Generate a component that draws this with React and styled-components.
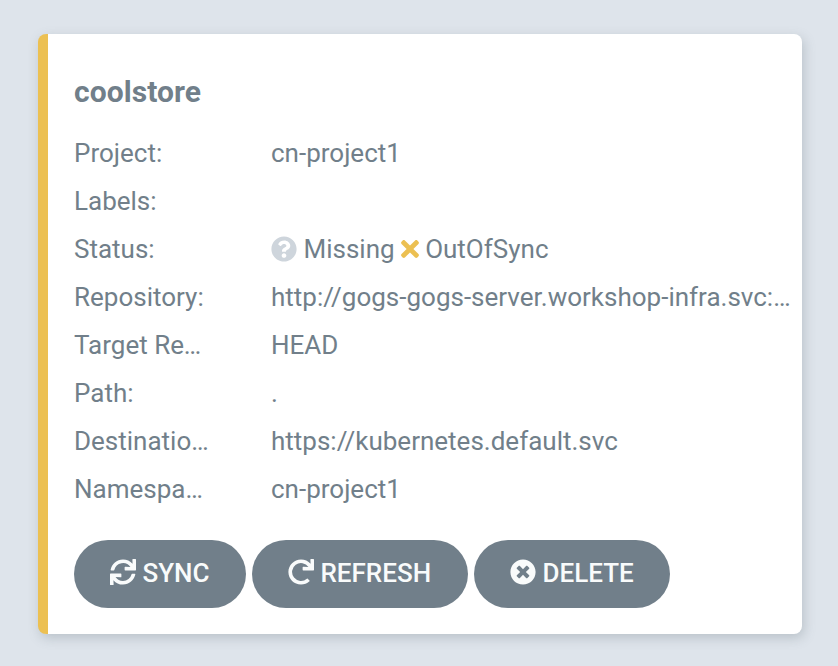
import React from 'react';
import styled, { createGlobalStyle } from 'styled-components';
import { FaQuestionCircle, FaTimes, FaSync, FaRedo, FaTimesCircle } from 'react-icons/fa';

const GlobalStyle = createGlobalStyle`
  * { box-sizing: border-box; }
  body {
    margin: 0;
    background: #dee4eb;
    font-family: Roboto, sans-serif;
    -webkit-font-smoothing: antialiased;
  }
`;

const Page = styled.main`
  height: 666px;
  padding: 34px 36px 32px 38px;
  background: #dee4eb;
  color: #717f8a;
`;

const Card = styled.article`
  height: 600px;
  padding: 34px 8px 0 26px;
  border-left: 10px solid #ecc052;
  border-radius: 8px;
  background: #fff;
  box-shadow: 2px 4px 12px rgba(90, 105, 110, 0.27);
`;

const Title = styled.h1`
  margin: 0 0 13px;
  font-size: 30px;
  line-height: 48px;
  font-weight: 700;
  letter-spacing: 0.06px;
`;

const Details = styled.dl`
  margin: 0;
`;

const Row = styled.div`
  display: grid;
  grid-template-columns: 137px 523px;
  column-gap: 60px;
  height: 48px;
  font-size: 26px;
  line-height: 48px;
`;

const Term = styled.dt`
  overflow: hidden;
  text-overflow: ellipsis;
  white-space: nowrap;
`;

const Value = styled.dd`
  display: flex;
  align-items: center;
  margin: 0;
  white-space: nowrap;
`;

const Text = styled.span`
  overflow: hidden;
  text-overflow: ellipsis;
`;

const StatusIcon = styled.svg`
  flex: none;
  width: ${(p) => p.$width}px;
  height: 26px;
  margin: 0 6.5px 1px ${(p) => p.$before || 0}px;
  color: ${(p) => p.$color};
`;

const StatusCross = styled(StatusIcon)`
  margin-right: 5px;
`;

const Actions = styled.div`
  display: flex;
  gap: 6px;
  margin-top: 27px;
`;

const Button = styled.button`
  display: flex;
  align-items: center;
  gap: 6.5px;
  width: ${(p) => p.$width}px;
  height: 68px;
  padding: 0 0 2px 36px;
  border: 0;
  border-radius: 34px;
  background: #717f8a;
  color: #f9fbfb;
  font: 500 26px/66px Roboto, sans-serif;
  svg { flex: none; width: 26px; height: 26px; margin-bottom: 2px; }
`;

const fields = [
  ['Project:', 'cn-project1'],
  ['Labels:', ''],
  ['Status:', null],
  ['Repository:', 'http://gogs-gogs-server.workshop-infra.svc:3000/coolstore'],
  ['Target Revision:', 'HEAD'],
  ['Path:', '.'],
  ['Destination:', 'https://kubernetes.default.svc'],
  ['Namespace:', 'cn-project1'],
];

export default function App() {
  return (
    <Page>
      <GlobalStyle />
      <Card>
        <Title>coolstore</Title>
        <Details>
          {fields.map(([term, value]) => (
            <Row key={term}>
              <Term>{term}</Term>
              <Value>
                {value === null ? (
                  <>
                    <StatusIcon as={FaQuestionCircle} $width={26} $color="#ced5dc" />
                    <Text>Missing</Text>
                    <StatusCross as={FaTimes} $width={20} $before={5.5} $color="#ecc052" />
                    <Text>OutOfSync</Text>
                  </>
                ) : (
                  <Text>{value}</Text>
                )}
              </Value>
            </Row>
          ))}
        </Details>
        <Actions>
          <Button $width={172}><FaSync />SYNC</Button>
          <Button $width={216}><FaRedo />REFRESH</Button>
          <Button $width={196}><FaTimesCircle />DELETE</Button>
        </Actions>
      </Card>
    </Page>
  );
}
